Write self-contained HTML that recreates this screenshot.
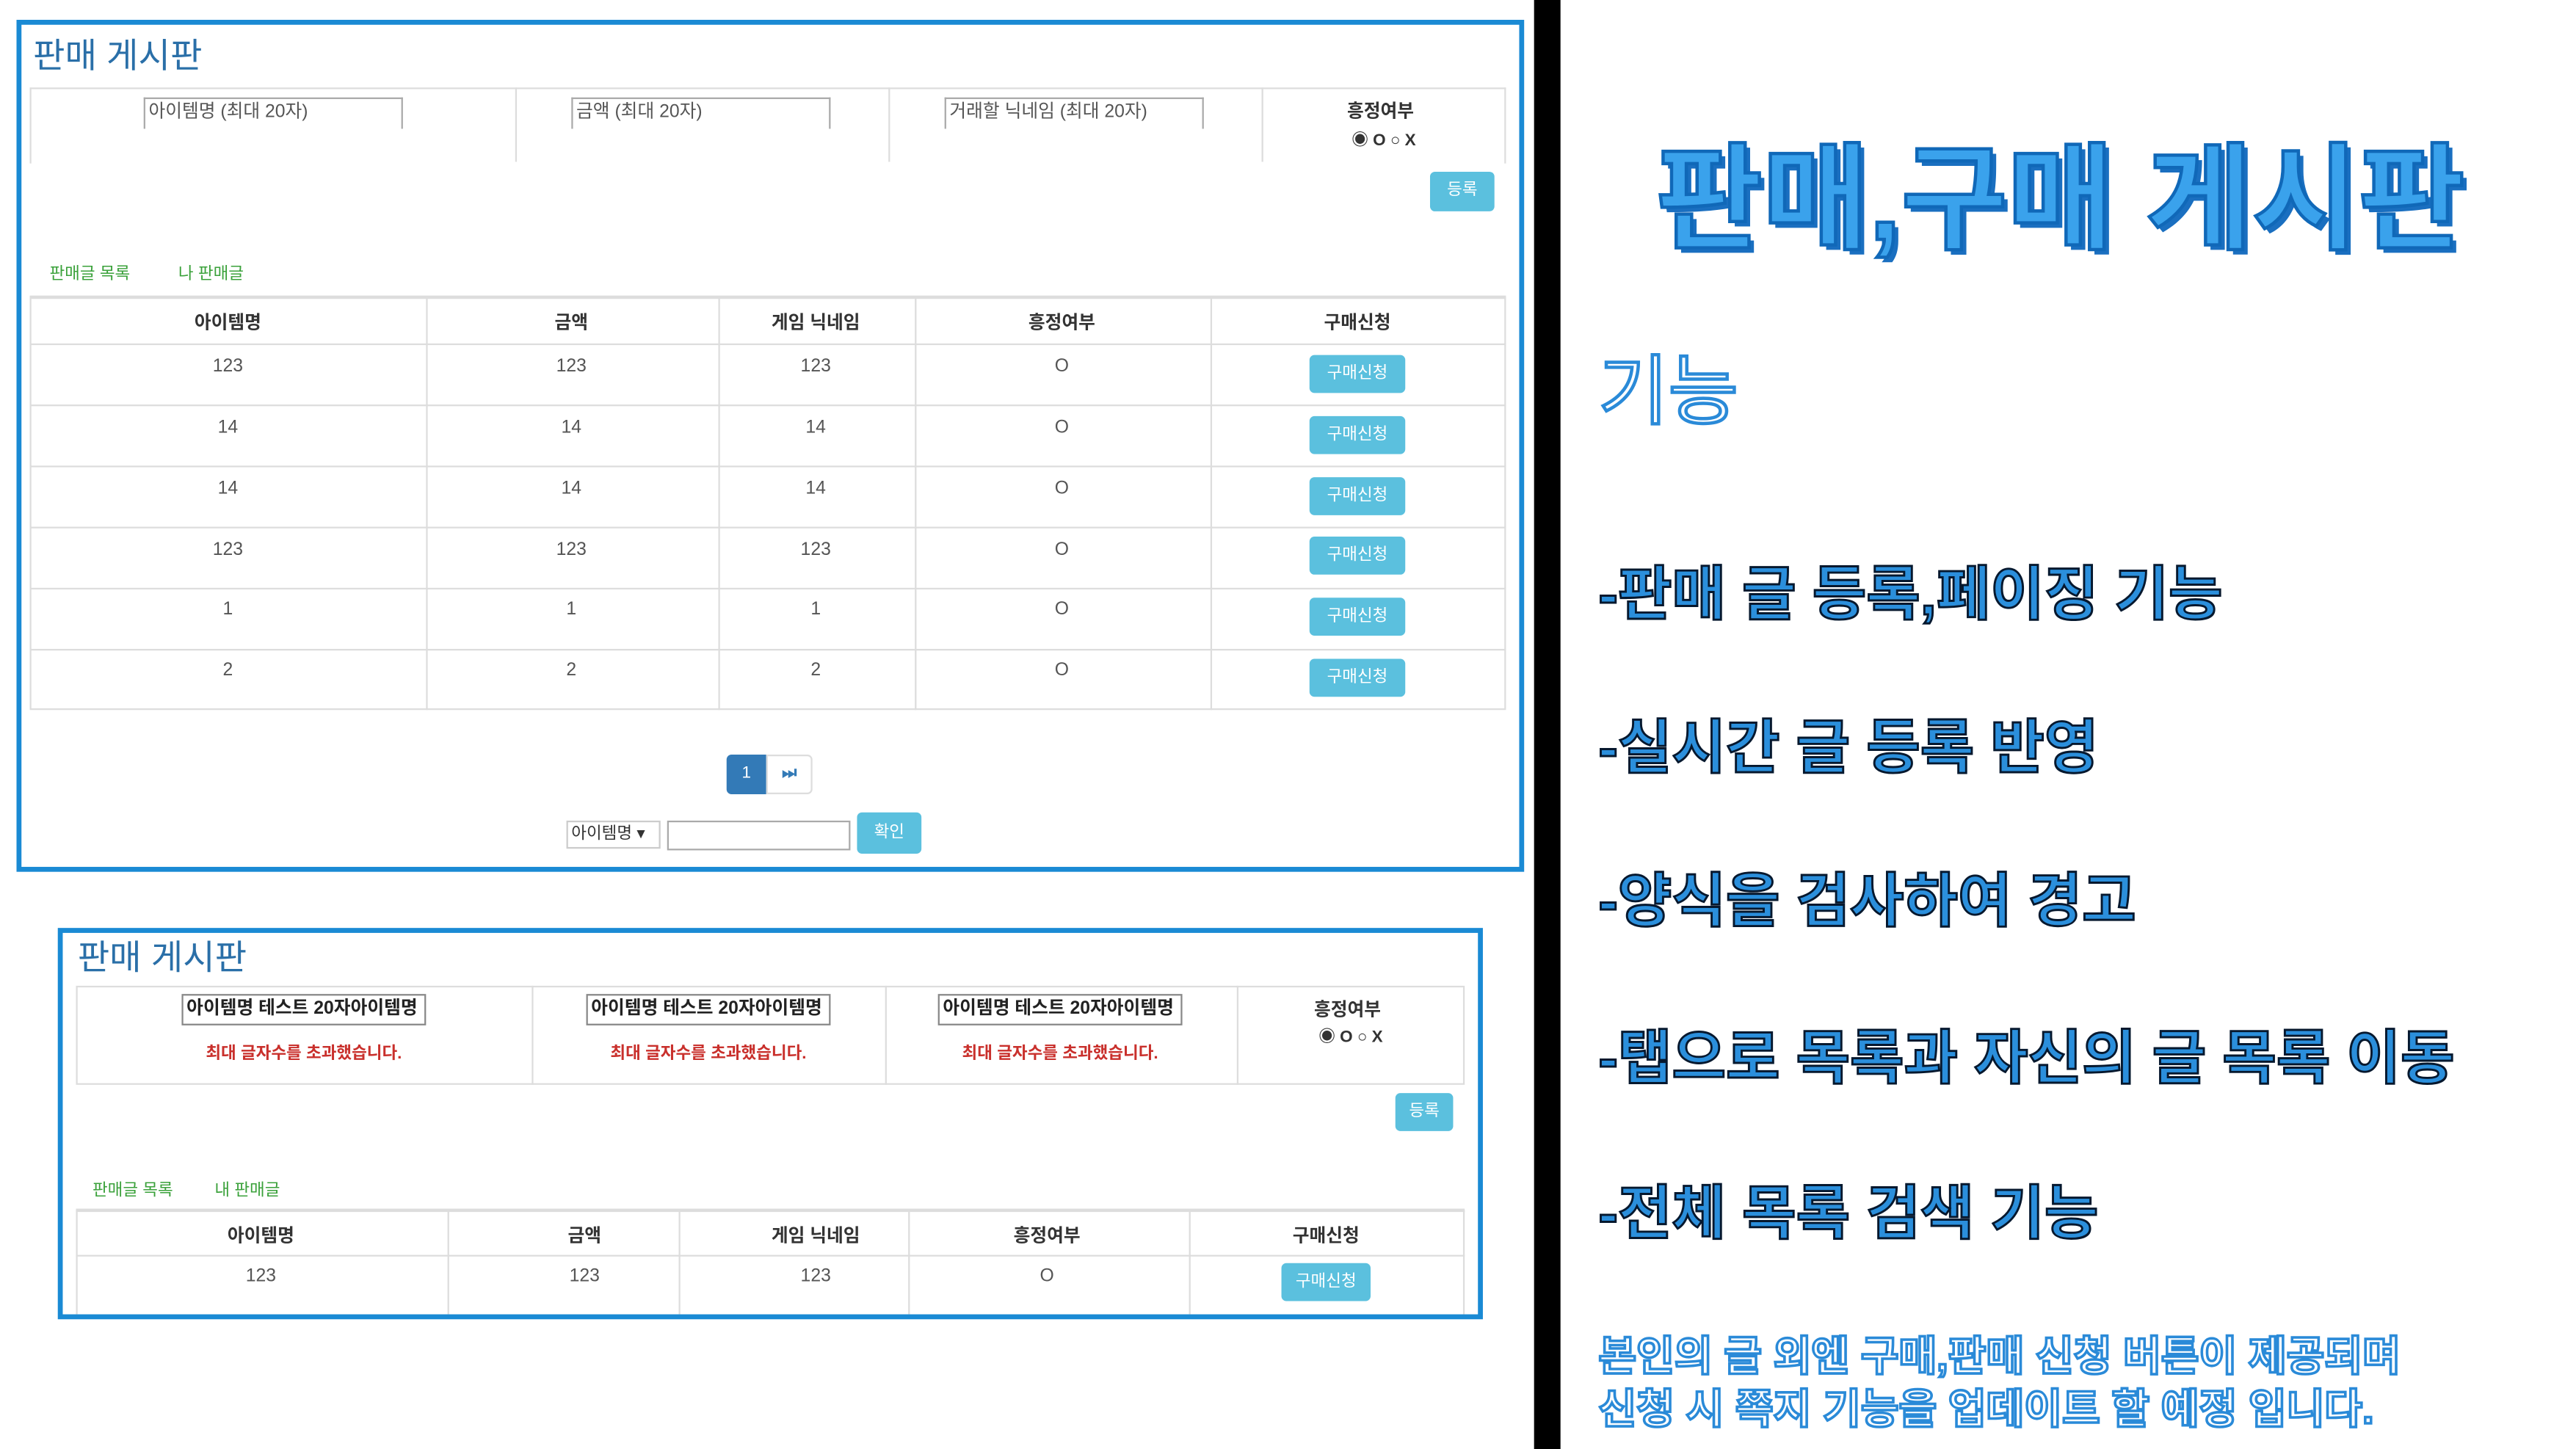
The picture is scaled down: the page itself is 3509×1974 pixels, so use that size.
<!DOCTYPE html>
<html><head><meta charset="utf-8">
<style>
html,body{margin:0;padding:0;background:#fff;overflow:hidden;}
body{width:3509px;height:1974px;position:relative;}
#w{position:absolute;left:0;top:0;width:1560px;height:878px;transform:scale(2.2494);transform-origin:0 0;font-family:"Liberation Sans","Noto Sans CJK KR","NanumGothic",sans-serif;color:#333;}
.a{position:absolute;}
.box{position:absolute;border:3px solid #1a8ad4;box-sizing:border-box;background:#fff;}
.ttl{position:absolute;color:#2a6fa8;font-size:21px;}
.cell{position:absolute;border:1px solid #ddd;box-sizing:border-box;}
.inp{position:absolute;border:1px solid #aaa;border-bottom:none;height:19px;box-sizing:border-box;font-size:11px;line-height:17px;padding-left:2px;color:#555;background:#fff;}
.btn{position:absolute;background:#5bc0de;border-radius:3px;color:#fff;font-size:10px;text-align:center;}
.tab{position:absolute;color:#3aa13a;font-size:10px;}
.c{position:absolute;text-align:center;font-size:11px;color:#555;transform:translateX(-50%);white-space:nowrap;}
.h{font-weight:bold;color:#333;}
.hl{position:absolute;height:1px;background:#ddd;}
.vl{position:absolute;width:1px;background:#ddd;}
.red{position:absolute;color:#c9302c;font-size:10px;transform:translateX(-50%);white-space:nowrap;font-weight:bold;}
.bul{position:absolute;left:968px;font-size:35.5px;font-weight:bold;color:#2b8fdc;-webkit-text-stroke:1.3px #06182e;white-space:nowrap;line-height:1;}
</style></head><body><div id="w">

<div class="a" style="left:929px;top:0;width:16px;height:878px;background:#000"></div>

<div class="box" style="left:10px;top:12px;width:913px;height:516px"></div>
<div class="ttl" style="left:20px;top:18px">판매 게시판</div>
<div class="cell" style="left:18px;top:53px;width:894px;height:46px;border-bottom:none"></div>
<div class="vl" style="left:312px;top:53px;height:45px"></div>
<div class="vl" style="left:538px;top:53px;height:45px"></div>
<div class="vl" style="left:764px;top:53px;height:45px"></div>
<div class="inp" style="left:87px;top:59px;width:157px">아이템명 (최대 20자)</div>
<div class="inp" style="left:346px;top:59px;width:157px">금액 (최대 20자)</div>
<div class="inp" style="left:572px;top:59px;width:157px">거래할 닉네임 (최대 20자)</div>
<div class="c h" style="left:836px;top:59px;font-size:11px">흥정여부</div>
<div class="c h" style="left:838px;top:76px;font-size:10px">◉ O ○ X</div>
<div class="btn" style="left:866px;top:104px;width:39px;height:24px;line-height:24px">등록</div>
<div class="tab" style="left:30px;top:157px">판매글 목록</div>
<div class="tab" style="left:108px;top:157px">나 판매글</div>

<div class="a" style="left:18px;top:179px;width:894px;height:2px;background:#ddd"></div>
<div class="cell" style="left:18px;top:180px;width:894px;height:250px"></div>
<div class="hl" style="left:18px;top:208px;width:894px"></div>
<div class="hl" style="left:18px;top:245px;width:894px"></div>
<div class="hl" style="left:18px;top:282px;width:894px"></div>
<div class="hl" style="left:18px;top:319px;width:894px"></div>
<div class="hl" style="left:18px;top:356px;width:894px"></div>
<div class="hl" style="left:18px;top:393px;width:894px"></div>
<div class="vl" style="left:258px;top:180px;height:250px"></div>
<div class="vl" style="left:435px;top:180px;height:250px"></div>
<div class="vl" style="left:554px;top:180px;height:250px"></div>
<div class="vl" style="left:733px;top:180px;height:250px"></div>
<div class="c h" style="left:138px;top:187px">아이템명</div>
<div class="c h" style="left:346px;top:187px">금액</div>
<div class="c h" style="left:494px;top:187px">게임 닉네임</div>
<div class="c h" style="left:643px;top:187px">흥정여부</div>
<div class="c h" style="left:822px;top:187px">구매신청</div>

<div class="c" style="left:138px;top:216px">123</div><div class="c" style="left:346px;top:216px">123</div><div class="c" style="left:494px;top:216px">123</div><div class="c" style="left:643px;top:216px">O</div>
<div class="btn" style="left:793px;top:215px;width:58px;height:23px;line-height:23px">구매신청</div>
<div class="c" style="left:138px;top:253px">14</div><div class="c" style="left:346px;top:253px">14</div><div class="c" style="left:494px;top:253px">14</div><div class="c" style="left:643px;top:253px">O</div>
<div class="btn" style="left:793px;top:252px;width:58px;height:23px;line-height:23px">구매신청</div>
<div class="c" style="left:138px;top:290px">14</div><div class="c" style="left:346px;top:290px">14</div><div class="c" style="left:494px;top:290px">14</div><div class="c" style="left:643px;top:290px">O</div>
<div class="btn" style="left:793px;top:289px;width:58px;height:23px;line-height:23px">구매신청</div>
<div class="c" style="left:138px;top:327px">123</div><div class="c" style="left:346px;top:327px">123</div><div class="c" style="left:494px;top:327px">123</div><div class="c" style="left:643px;top:327px">O</div>
<div class="btn" style="left:793px;top:325px;width:58px;height:23px;line-height:23px">구매신청</div>
<div class="c" style="left:138px;top:363px">1</div><div class="c" style="left:346px;top:363px">1</div><div class="c" style="left:494px;top:363px">1</div><div class="c" style="left:643px;top:363px">O</div>
<div class="btn" style="left:793px;top:362px;width:58px;height:23px;line-height:23px">구매신청</div>
<div class="c" style="left:138px;top:400px">2</div><div class="c" style="left:346px;top:400px">2</div><div class="c" style="left:494px;top:400px">2</div><div class="c" style="left:643px;top:400px">O</div>
<div class="btn" style="left:793px;top:399px;width:58px;height:23px;line-height:23px">구매신청</div>

<div class="a" style="left:440px;top:457px;width:24px;height:24px;background:#337ab7;border-radius:3px 0 0 3px;color:#fff;font-size:10px;text-align:center;line-height:24px">1</div>
<div class="a" style="left:464px;top:457px;width:26px;height:22px;border:1px solid #ddd;border-radius:0 3px 3px 0;color:#337ab7;font-size:10px;text-align:center;line-height:22px;font-weight:bold">⏭</div>
<div class="a" style="left:343px;top:497px;width:57px;height:17px;border:1px solid #ccc;box-sizing:border-box;font-size:10px;line-height:15px;padding-left:2px;color:#333">아이템명 ▾</div>
<div class="a" style="left:404px;top:497px;width:111px;height:18px;border:1px solid #aaa;box-sizing:border-box"></div>
<div class="btn" style="left:519px;top:492px;width:39px;height:25px;line-height:25px">확인</div>

<div class="box" style="left:35px;top:562px;width:863px;height:237px"></div>
<div class="ttl" style="left:47px;top:564px">판매 게시판</div>
<div class="cell" style="left:46px;top:597px;width:841px;height:60px"></div>
<div class="vl" style="left:322px;top:597px;height:60px"></div>
<div class="vl" style="left:536px;top:597px;height:60px"></div>
<div class="vl" style="left:749px;top:597px;height:60px"></div>
<div class="inp" style="left:110px;top:602px;width:148px;height:19px;border:1px solid #888;color:#222;font-weight:bold">아이템명 테스트 20자아이템명</div>
<div class="inp" style="left:355px;top:602px;width:148px;height:19px;border:1px solid #888;color:#222;font-weight:bold">아이템명 테스트 20자아이템명</div>
<div class="inp" style="left:568px;top:602px;width:148px;height:19px;border:1px solid #888;color:#222;font-weight:bold">아이템명 테스트 20자아이템명</div>
<div class="red" style="left:184px;top:629px">최대 글자수를 초과했습니다.</div>
<div class="red" style="left:429px;top:629px">최대 글자수를 초과했습니다.</div>
<div class="red" style="left:642px;top:629px">최대 글자수를 초과했습니다.</div>
<div class="c h" style="left:816px;top:603px;font-size:11px">흥정여부</div>
<div class="c h" style="left:818px;top:619px;font-size:10px">◉ O ○ X</div>
<div class="btn" style="left:845px;top:662px;width:35px;height:23px;line-height:23px">등록</div>
<div class="tab" style="left:56px;top:712px">판매글 목록</div>
<div class="tab" style="left:130px;top:712px">내 판매글</div>
<div class="a" style="left:46px;top:732px;width:841px;height:2px;background:#ddd"></div>
<div class="cell" style="left:46px;top:733px;width:841px;height:63px;border-bottom:none"></div>
<div class="hl" style="left:46px;top:760px;width:841px"></div>
<div class="vl" style="left:271px;top:733px;height:63px"></div>
<div class="vl" style="left:411px;top:733px;height:63px"></div>
<div class="vl" style="left:550px;top:733px;height:63px"></div>
<div class="vl" style="left:720px;top:733px;height:63px"></div>
<div class="c h" style="left:158px;top:740px">아이템명</div>
<div class="c h" style="left:354px;top:740px">금액</div>
<div class="c h" style="left:494px;top:740px">게임 닉네임</div>
<div class="c h" style="left:634px;top:740px">흥정여부</div>
<div class="c h" style="left:803px;top:740px">구매신청</div>
<div class="c" style="left:158px;top:767px">123</div><div class="c" style="left:354px;top:767px">123</div><div class="c" style="left:494px;top:767px">123</div><div class="c" style="left:634px;top:767px">O</div>
<div class="btn" style="left:776px;top:765px;width:54px;height:23px;line-height:23px">구매신청</div>

<div class="a" style="left:1003px;top:86px;font-size:70px;font-weight:bold;color:#3aa2ec;-webkit-text-stroke:2px #1068b8;text-shadow:3px 3px 0 #1a6fc0;white-space:nowrap;line-height:1">판매,구매 게시판</div>
<div class="a" style="left:968px;top:214px;font-size:46px;color:#fff;-webkit-text-stroke:2px #2a8ad8;white-space:nowrap;line-height:1">기능</div>
<div class="bul" style="top:343px">-판매 글 등록,페이징 기능</div>
<div class="bul" style="top:436px">-실시간 글 등록 반영</div>
<div class="bul" style="top:529px">-양식을 검사하여 경고</div>
<div class="bul" style="top:624px">-탭으로 목록과 자신의 글 목록 이동</div>
<div class="bul" style="top:718px">-전체 목록 검색 기능</div>
<div class="a" style="left:968px;top:806px;font-size:25px;font-weight:bold;color:#fff;-webkit-text-stroke:1.6px #2a8ad8;white-space:nowrap;line-height:32px">본인의 글 외엔 구매,판매 신청 버튼이 제공되며<br>신청 시 쪽지 기능을 업데이트 할 예정 입니다.</div>

</div></body></html>
